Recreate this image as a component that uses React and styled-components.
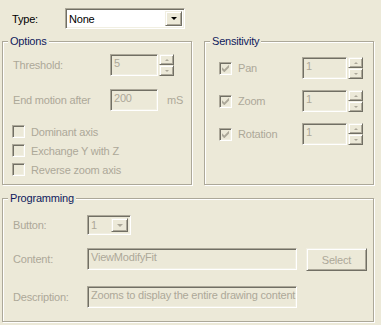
import React from 'react';
import styled, { createGlobalStyle, css } from 'styled-components';

const GlobalStyle = createGlobalStyle`
	html, body {
		margin: 0;
		padding: 0;
		background: #ece9d8;
	}
`;

const sunken = css`
	border: 1px solid;
	border-color: #aca899 #fff #fff #aca899;
	box-shadow: inset 1px 1px 0 #716f64, inset -1px -1px 0 #f1efe2;
`;

const raised = css`
	border: 1px solid;
	border-color: #f1efe2 #716f64 #716f64 #f1efe2;
	box-shadow: inset 1px 1px 0 #fff, inset -1px -1px 0 #aca899;
`;

const Window = styled.div`
	width: 381px;
	height: 325px;
	box-sizing: border-box;
	padding-top: 8px;
	background: #ece9d8;
	font-family: 'Liberation Sans', Arial, sans-serif;
	font-size: 11px;
	letter-spacing: -0.2px;
	color: #000;
	overflow: hidden;
`;

const Row = styled.div`
	display: flex;
	align-items: ${p => p.$align || 'center'};
	margin-top: ${p => p.$top || 0}px;
	margin-left: ${p => p.$left || 0}px;
`;

const Label = styled.span`
	width: ${p => p.$w}px;
	flex: none;
	color: ${p => (p.$disabled ? '#aca899' : '#000')};
	line-height: ${p => p.$lh || 'normal'};
	white-space: nowrap;
`;

const Combo = styled.div`
	${sunken};
	box-sizing: border-box;
	width: ${p => p.$w}px;
	height: ${p => p.$h}px;
	background: ${p => (p.$disabled ? '#ece9d8' : '#fff')};
	display: flex;
	align-items: center;
	padding: 2px;
`;

const ComboText = styled.span`
	flex: 1;
	padding-left: 1px;
	color: ${p => (p.$disabled ? '#aca899' : '#000')};
`;

const DropButton = styled.div`
	${raised};
	box-sizing: border-box;
	width: 17px;
	height: 100%;
	display: flex;
	align-items: center;
	justify-content: center;
	background: #ece9d8;
`;

const Triangle = styled.span`
	width: 0;
	height: 0;
	border-left: ${p => p.$size}px solid transparent;
	border-right: ${p => p.$size}px solid transparent;
	${p => (p.$up ? 'border-bottom' : 'border-top')}: ${p => p.$size}px solid ${p => p.$color};
`;

const Groups = styled.div`
	display: flex;
	gap: 12px;
	margin: 12px 0 0 2px;
`;

const Group = styled.div`
	position: relative;
	box-sizing: border-box;
	width: ${p => p.$w}px;
	height: ${p => p.$h}px;
	border: 1px solid #aca899;
	box-shadow: inset 1px 1px 0 #fff, 1px 1px 0 #fff;
	padding: ${p => p.$pad};
	margin-top: ${p => p.$top || 0}px;
	margin-left: ${p => p.$left || 0}px;
`;

const Legend = styled.span`
	position: absolute;
	top: -8px;
	left: 5px;
	padding: 0 2px;
	background: #ece9d8;
	color: #0f1a5c;
	line-height: 14px;
`;

const Edit = styled.div`
	${sunken};
	box-sizing: border-box;
	width: ${p => p.$w}px;
	height: 22px;
	padding: 2px 3px;
	line-height: 13px;
	color: #aca899;
	background: #ece9d8;
	white-space: nowrap;
	overflow: hidden;
	flex: none;
`;

const Spinner = styled.div`
	display: flex;
	flex-direction: column;
	margin-left: 1px;
	height: 22px;
`;

const SpinButton = styled.div`
	${raised};
	box-sizing: border-box;
	width: 15px;
	height: 11px;
	display: flex;
	align-items: center;
	justify-content: center;
	background: #ece9d8;
`;

const Unit = styled.span`
	margin-left: 9px;
	color: #aca899;
`;

const CheckList = styled.div`
	display: flex;
	flex-direction: column;
	gap: 6px;
	margin-top: 14px;
	margin-left: -1px;
`;

const Check = styled.label`
	display: flex;
	align-items: center;
	gap: 6px;
	width: ${p => (p.$w ? `${p.$w}px` : 'auto')};
	flex: none;
	color: #aca899;
	height: 13px;
`;

const Box = styled.span`
	${sunken};
	box-sizing: border-box;
	width: 13px;
	height: 13px;
	background: #ece9d8;
	display: flex;
	align-items: center;
	justify-content: center;
	flex: none;
`;

const PushButton = styled.div`
	${raised};
	box-sizing: border-box;
	width: 61px;
	height: 23px;
	margin-left: 9px;
	display: flex;
	align-items: center;
	justify-content: center;
	color: #aca899;
`;

const Stack = styled.div`
	display: flex;
	flex-direction: column;
	gap: ${p => p.$gap}px;
`;

const CheckBox = ({ checked }) => (
	<Box>
		{checked && (
			<svg width="7" height="7" viewBox="0 0 7 7">
				<path d="M0 2.2 L2.3 4.5 L7 -0.2 L7 2.6 L2.3 7.3 L0 5 Z" fill="#aca899" />
			</svg>
		)}
	</Box>
);

const Spin = () => (
	<Spinner>
		<SpinButton>
			<Triangle $up $size={2} $color="#aca899" />
		</SpinButton>
		<SpinButton>
			<Triangle $size={2} $color="#aca899" />
		</SpinButton>
	</Spinner>
);

const SensRow = ({ label }) => (
	<Row>
		<Check $w={83}>
			<CheckBox checked />
			{label}
		</Check>
		<Edit $w={45}>1</Edit>
		<Spin />
	</Row>
);

export default function App() {
	return (
		<Window>
			<GlobalStyle />
			<Row $left={12}>
				<Label $w={53}>Type:</Label>
				<Combo $w={120} $h={21}>
					<ComboText>None</ComboText>
					<DropButton>
						<Triangle $size={3.5} $color="#000" />
					</DropButton>
				</Combo>
			</Row>

			<Groups>
				<Group $w={190} $h={144} $pad="12px 0 0 10px">
					<Legend>Options</Legend>
					<Row>
						<Label $w={97} $disabled>Threshold:</Label>
						<Edit $w={48}>5</Edit>
						<Spin />
					</Row>
					<Row $top={13}>
						<Label $w={97} $disabled>End motion after</Label>
						<Edit $w={48}>200</Edit>
						<Unit>mS</Unit>
					</Row>
					<CheckList>
						<Check>
							<CheckBox />
							Dominant axis
						</Check>
						<Check>
							<CheckBox />
							Exchange Y with Z
						</Check>
						<Check>
							<CheckBox />
							Reverse zoom axis
						</Check>
					</CheckList>
				</Group>

				<Group $w={170} $h={144} $pad="15px 0 0 14px">
					<Legend>Sensitivity</Legend>
					<Stack $gap={11}>
						<SensRow label="Pan" />
						<SensRow label="Zoom" />
						<SensRow label="Rotation" />
					</Stack>
				</Group>
			</Groups>

			<Group $w={372} $h={124} $top={13} $left={2} $pad="16px 0 0 10px">
				<Legend>Programming</Legend>
				<Row>
					<Label $w={74} $disabled>Button:</Label>
					<Combo $w={44} $h={20} $disabled>
						<ComboText $disabled>1</ComboText>
						<DropButton>
							<Triangle $size={3.5} $color="#aca899" />
						</DropButton>
					</Combo>
				</Row>
				<Row $top={13} $align="flex-start">
					<Label $w={74} $disabled $lh="22px">Content:</Label>
					<Edit $w={210}>ViewModifyFit</Edit>
					<PushButton>Select</PushButton>
				</Row>
				<Row $top={15}>
					<Label $w={74} $disabled>Description:</Label>
					<Edit $w={210}>Zooms to display the entire drawing content</Edit>
				</Row>
			</Group>
		</Window>
	);
}
